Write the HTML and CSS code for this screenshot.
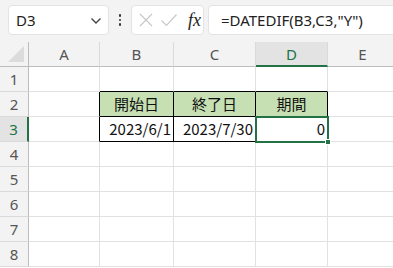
FILE: index.html
```html
<!DOCTYPE html>
<html lang="ja">
<head>
<meta charset="utf-8">
<link rel="stylesheet" href="styles.css">
</head>
<body>
<div class="toolbar">
  <div class="namebox">
    <span class="name">D3</span>
    <svg class="chev" width="12" height="8" viewBox="0 0 12 8"><path d="M1.5 1.5 L6 6 L10.5 1.5" fill="none" stroke="#444" stroke-width="1.4"/></svg>
  </div>
  <div class="dots"><span></span><span></span><span></span></div>
  <div class="fxbox">
    <svg width="16" height="16" viewBox="0 0 16 16"><path d="M2 2 L14 14 M14 2 L2 14" stroke="#c8c8c8" stroke-width="1.2" fill="none"/></svg>
    <svg width="18" height="16" viewBox="0 0 18 16"><path d="M1.5 8.5 L6.5 13.5 L16.5 2.5" stroke="#c8c8c8" stroke-width="1.2" fill="none"/></svg>
    <span class="fx">fx</span>
  </div>
  <div class="formula">=DATEDIF(B3,C3,"Y")</div>
</div>
<div class="sheet">
  <div class="corner"><div class="tri"></div></div>
  <div class="ch">A</div>
  <div class="ch">B</div>
  <div class="ch">C</div>
  <div class="ch sel">D</div>
  <div class="ch">E</div>

  <div class="rh">1</div>
  <div class="c"></div><div class="c bb"></div><div class="c bb"></div><div class="c bb"></div><div class="c"></div>

  <div class="rh">2</div>
  <div class="c br"></div><div class="c hd">開始日</div><div class="c hd">終了日</div><div class="c hd">期間</div><div class="c"></div>

  <div class="rh rsel">3</div>
  <div class="c br"></div><div class="c td num">2023/6/1</div><div class="c td num">2023/7/30</div><div class="c td num active">0</div><div class="c"></div>

  <div class="rh">4</div>
  <div class="c"></div><div class="c"></div><div class="c"></div><div class="c"></div><div class="c"></div>
  <div class="rh">5</div>
  <div class="c"></div><div class="c"></div><div class="c"></div><div class="c"></div><div class="c"></div>
  <div class="rh">6</div>
  <div class="c"></div><div class="c"></div><div class="c"></div><div class="c"></div><div class="c"></div>
  <div class="rh">7</div>
  <div class="c"></div><div class="c"></div><div class="c"></div><div class="c"></div><div class="c"></div>
  <div class="rh">8</div>
  <div class="c"></div><div class="c"></div><div class="c"></div><div class="c"></div><div class="c"></div>
</div>
</body>
</html>
```

FILE: styles.css
```css
html, body {
  margin: 0;
  padding: 0;
  background: #ffffff;
  overflow: hidden;
  font-family: "Noto Sans CJK JP", "Noto Sans", sans-serif;
}
.toolbar {
  height: 42px;
  background: #f3f3f3;
  display: flex;
  align-items: flex-start;
  padding: 5px 0 0 8px;
  box-sizing: border-box;
  white-space: nowrap;
  overflow: hidden;
}
.namebox {
  flex: 0 0 101px;
  height: 30px;
  box-sizing: border-box;
  background: #fff;
  border: 1px solid #e3e3e3;
  border-radius: 4px;
  display: flex;
  align-items: center;
  justify-content: space-between;
  padding: 0 6px 0 7px;
}
.name {
  font-family: "Noto Sans", sans-serif;
  font-size: 15px;
  color: #222;
}
.chev { margin-top: 1px; }
.dots {
  flex: 0 0 22px;
  height: 30px;
  display: flex;
  flex-direction: column;
  align-items: center;
  justify-content: center;
  gap: 2px;
}
.dots span {
  width: 2.5px;
  height: 2.5px;
  border-radius: 50%;
  background: #333;
}
.fxbox {
  flex: 0 0 73px;
  height: 30px;
  box-sizing: border-box;
  background: #fff;
  border: 1px solid #e3e3e3;
  border-radius: 4px;
  display: flex;
  align-items: center;
  gap: 6px;
  padding-left: 6px;
}
.fx {
  font-family: "Liberation Serif", serif;
  font-style: italic;
  font-size: 18px;
  color: #222;
  margin-left: 4px;
}
.formula {
  flex: 0 0 220px;
  margin-left: 4px;
  height: 30px;
  box-sizing: border-box;
  background: #fff;
  border: 1px solid #e3e3e3;
  border-radius: 4px;
  padding-left: 12px;
  font-family: "Noto Sans", sans-serif;
  font-size: 15px;
  line-height: 28px;
  color: #222;
}
.sheet {
  display: grid;
  grid-template-columns: 29px 71px 74px 82px 72px 70px;
  grid-template-rows: repeat(9, 25px);
}
.sheet > div { box-sizing: border-box; }
.corner {
  background: #f3f3f3;
  border-right: 1px solid #bdbdbd;
  border-bottom: 1px solid #bdbdbd;
  position: relative;
}
.tri {
  position: absolute;
  right: 4px;
  bottom: 4px;
  width: 0;
  height: 0;
  border-left: 16px solid transparent;
  border-bottom: 16px solid #dcdcdc;
}
.ch {
  background: #f3f3f3;
  border-right: 1px solid #dadada;
  border-bottom: 1px solid #bdbdbd;
  text-align: center;
  font-family: "Noto Sans", sans-serif;
  font-size: 15px;
  line-height: 24px;
  color: #555;
}
.ch.sel {
  background: #e3e3e3;
  color: #217346;
  border-bottom: 2px solid #217346;
}
.rh {
  background: #f3f3f3;
  border-right: 1px solid #bdbdbd;
  border-bottom: 1px solid #dadada;
  text-align: center;
  font-family: "Noto Sans", sans-serif;
  font-size: 15px;
  line-height: 24px;
  color: #555;
}
.rh.rsel {
  background: #e3e3e3;
  color: #217346;
  border-right: 2px solid #217346;
}
.c {
  border-right: 1px solid #e1e1e1;
  border-bottom: 1px solid #e1e1e1;
  font-size: 15px;
  line-height: 24px;
  color: #111;
  padding: 0 2px;
}
.c.br { border-right-color: #000; }
.c.bb { border-bottom-color: #000; }
.c.hd {
  background: #c6e0b4;
  border-right-color: #000;
  border-bottom-color: #000;
  text-align: center;
}
.c.td {
  border-right-color: #000;
  border-bottom-color: #000;
}
.num { text-align: right; }
.active { position: relative; }
.active::after {
  content: "";
  position: absolute;
  left: -1px;
  top: -1px;
  right: -2px;
  bottom: -2px;
  border: 2px solid #217346;
}
.active::before {
  content: "";
  position: absolute;
  right: -4px;
  bottom: -4px;
  width: 6px;
  height: 6px;
  background: #217346;
  border: 1px solid #fff;
  box-sizing: border-box;
  z-index: 2;
}
```
